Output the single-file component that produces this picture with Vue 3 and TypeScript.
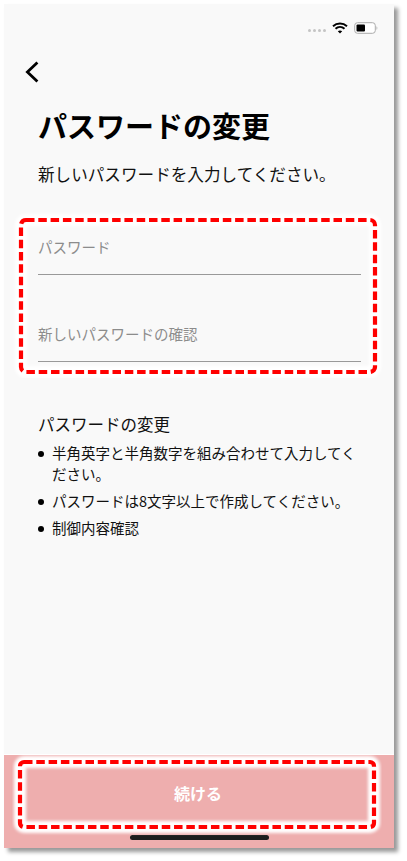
<script setup lang="ts">
const rules: string[] = [
  '半角英字と半角数字を組み合わせて入力してください。',
  'パスワードは8文字以上で作成してください。',
  '制御内容確認',
]
</script>

<template>
  <div class="page">
    <main class="phone">
      <div class="status">
        <span class="dots"><i v-for="n in 4" :key="n"></i></span>
        <svg class="wifi" width="16" height="12" viewBox="0 0 16 12">
          <path d="M1 4.2C5 .6 11 .6 15 4.2" fill="none" stroke="#000" stroke-width="2" />
          <path d="M3.5 6.8c2.6-2.3 6.4-2.3 9 0" fill="none" stroke="#000" stroke-width="2" />
          <path d="M5.8 9.2 8 11.6l2.2-2.4c-1.3-1-3.1-1-4.4 0z" fill="#000" />
        </svg>
        <svg class="battery" width="24" height="12" viewBox="0 0 24 12">
          <rect x="0.7" y="0.7" width="20.6" height="10.6" rx="2.8" fill="#fff" stroke="#aaa" stroke-width="1" />
          <rect x="2.5" y="2.5" width="8.5" height="7" rx="1" fill="#000" />
          <path d="M22.6 4.2c.9.4.9 3.2 0 3.6z" fill="#999" />
        </svg>
      </div>

      <div class="nav">
        <svg width="14" height="22" viewBox="0 0 14 22">
          <path d="M12.4 1.4 2.4 11l10 9.6" fill="none" stroke="#000" stroke-width="2.8" />
        </svg>
      </div>

      <h1 class="title">パスワードの変更</h1>
      <p class="sub">新しいパスワードを入力してください。</p>

      <section class="form">
        <div class="field"><span>パスワード</span></div>
        <div class="field"><span>新しいパスワードの確認</span></div>
        <svg class="mark mark-form" width="370" height="168" viewBox="0 0 370 168">
          <rect class="halo" x="8" y="10" width="354" height="152" rx="5" />
          <rect class="dash" x="8" y="10" width="354" height="152" rx="5" />
        </svg>
      </section>

      <h2 class="heading">パスワードの変更</h2>
      <ul class="rules">
        <li v-for="rule in rules" :key="rule">{{ rule }}</li>
      </ul>

      <footer class="footer">
        <div class="action">
          <button class="btn" type="button">続ける</button>
          <svg class="mark mark-btn" width="370" height="86" viewBox="0 0 370 86">
            <rect class="halo" x="8" y="10" width="354" height="65" rx="4" />
            <rect class="dash" x="8" y="10" width="354" height="65" rx="4" />
          </svg>
        </div>
        <div class="home"></div>
      </footer>
    </main>
  </div>
</template>

<style scoped>
.page {
  width: 407px;
  height: 861px;
  padding: 4px 0 0 4px;
  box-sizing: border-box;
  background: #fff;
  font-family: "Noto Sans CJK JP", "Noto Sans", sans-serif;
  color: #111;
}
.phone {
  width: 390px;
  height: 844px;
  background: #f9f9f9;
  box-shadow: 4px 4px 4px #999;
  display: flex;
  flex-direction: column;
}
.status {
  height: 40px;
  box-sizing: border-box;
  padding: 18px 16px 0 0;
  display: flex;
  justify-content: flex-end;
  align-items: flex-start;
}
.dots {
  display: flex;
  gap: 2px;
  margin: 7px 6px 0 0;
}
.dots i {
  width: 3px;
  height: 3px;
  border-radius: 50%;
  background: #c4c4c4;
}
.wifi {
  margin: 0 6px 0 0;
}
.battery {
  margin: 0;
}
.nav {
  height: 56px;
  box-sizing: border-box;
  padding: 17px 0 0 21px;
}
.nav svg {
  display: block;
}
.title {
  margin: 0 0 0 34px;
  font-size: 29px;
  line-height: 50px;
  font-weight: 700;
  color: #000;
}
.sub {
  margin: 12px 0 0 34px;
  font-size: 16.6px;
  line-height: 24px;
}
.form {
  position: relative;
  margin: 36px 33px 0 34px;
  display: flex;
  flex-direction: column;
  gap: 34px;
}
.field {
  padding: 13px 0 15px;
  border-bottom: 1px solid #999;
  font-size: 14.5px;
  line-height: 24px;
  color: #8c8c8c;
}
.mark {
  position: absolute;
  pointer-events: none;
}
.mark-form {
  left: -25px;
  top: -12px;
}
.halo {
  fill: none;
  stroke: #fff;
  stroke-width: 12;
  filter: blur(1.5px);
}
.dash {
  fill: none;
  stroke: #f00;
  stroke-width: 4.2;
  stroke-dasharray: 8.5 3.8;
}
.heading {
  margin: 50px 0 0 34px;
  font-size: 16.5px;
  line-height: 24px;
  font-weight: 400;
}
.rules {
  margin: 6px 33px 0 34px;
  padding: 0;
  list-style: none;
  display: flex;
  flex-direction: column;
  gap: 6px;
}
.rules li {
  position: relative;
  padding-left: 14px;
  font-size: 14.5px;
  line-height: 21px;
}
.rules li::before {
  content: "";
  position: absolute;
  left: 0;
  top: 9px;
  width: 6px;
  height: 6px;
  border-radius: 50%;
  background: #000;
}
.footer {
  margin-top: auto;
  height: 94px;
  box-sizing: border-box;
  padding: 13px 26px 0 24px;
  background: #eeaeae;
  border-top: 1px solid #fff;
}
.action {
  position: relative;
}
.btn {
  display: block;
  width: 100%;
  height: 51px;
  border: 0;
  padding: 0;
  background: #eeaeae;
  color: #fff;
  font: 700 16px/51px "Noto Sans CJK JP", "Noto Sans", sans-serif;
}
.mark-btn {
  left: -16px;
  top: -16px;
}
.home {
  width: 139px;
  height: 5px;
  margin: 16px 0 0 102px;
  border-radius: 3px;
  background: #1d1d1d;
}
</style>
